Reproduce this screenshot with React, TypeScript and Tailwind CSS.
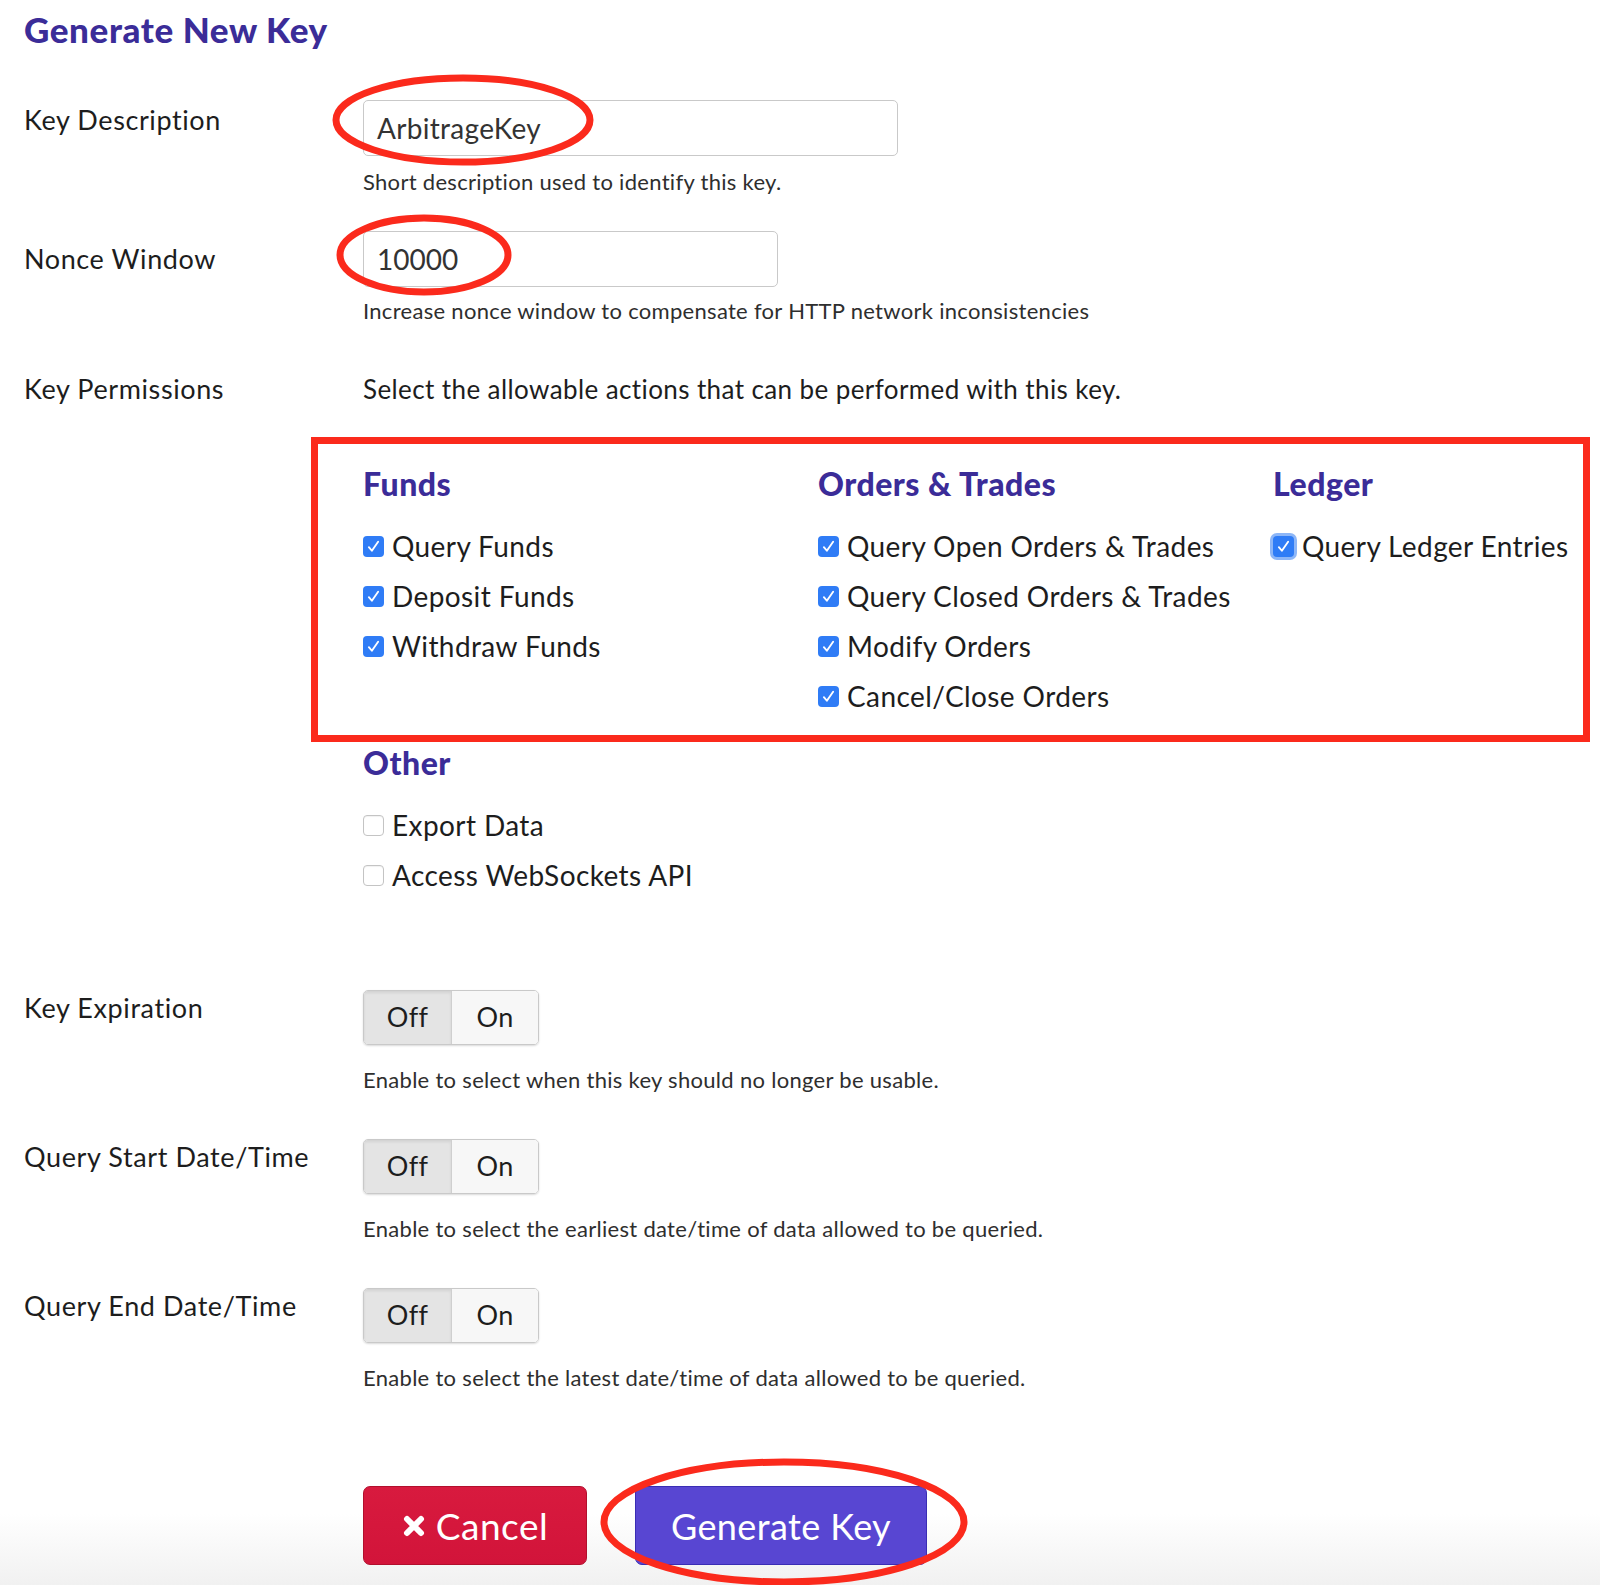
import React from "react";

const funds = ["Query Funds", "Deposit Funds", "Withdraw Funds"];
const orders = [
  "Query Open Orders & Trades",
  "Query Closed Orders & Trades",
  "Modify Orders",
  "Cancel/Close Orders",
];
const ledger = ["Query Ledger Entries"];
const other = ["Export Data", "Access WebSockets API"];

const Check = ({ checked, focus }: { checked: boolean; focus?: boolean }) => {
  if (!checked) {
    return (
      <span className="w-[21px] h-[21px] rounded-[4px] border border-[#c4c4c4] bg-white shrink-0 shadow-[inset_0_1px_1px_rgba(0,0,0,0.06)]"></span>
    );
  }
  return (
    <span
      className={
        "w-[21px] h-[21px] rounded-[4px] bg-[#2f7cf6] shrink-0 flex items-center justify-center " +
        (focus ? "ring-[3px] ring-[#8db6f7]" : "")
      }
    >
      <svg width="15" height="15" viewBox="0 0 12 12" fill="none">
        <path d="M2.3 6.5 L4.7 9.4 L9.7 2.2" stroke="white" strokeWidth="1.5" strokeLinecap="round" strokeLinejoin="round" />
      </svg>
    </span>
  );
};

const Item = ({ text, checked, focus }: { text: string; checked: boolean; focus?: boolean }) => (
  <div className="h-[50px] flex items-center gap-[8px]">
    <Check checked={checked} focus={focus} />
    <span className="text-[28px] tracking-[0.4px] text-[#1d1d1d] whitespace-nowrap">{text}</span>
  </div>
);

const Group = ({ title, items, checked, focusFirst }: { title: string; items: string[]; checked: boolean; focusFirst?: boolean }) => (
  <div>
    <h3 className="text-[32px] leading-[34px] font-black tracking-[0.5px] text-[#3b2c98]">{title}</h3>
    <div className="mt-[20px]">
      {items.map((t, i) => (
        <Item key={t} text={t} checked={checked} focus={focusFirst && i === 0} />
      ))}
    </div>
  </div>
);

const Toggle = () => (
  <div className="flex w-[176px] h-[55px] rounded-[5px] border border-[#c9c9c9] overflow-hidden shadow-[0_1px_2px_rgba(0,0,0,0.15)]">
    <div className="w-[88px] flex items-center justify-center bg-[#e4e4e4] border-r border-[#cfcfcf] shadow-[inset_0_2px_3px_rgba(0,0,0,0.08)] text-[27px] tracking-[0.3px] text-[#1d1d1d]">
      Off
    </div>
    <div className="flex-1 flex items-center justify-center bg-[#f7f7f7] text-[27px] tracking-[0.3px] text-[#1d1d1d]">
      On
    </div>
  </div>
);

const Label = ({ children, className = "pt-[3px]" }: { children: React.ReactNode; className?: string }) => (
  <div className={"w-[339px] shrink-0 text-[27px] leading-[30px] tracking-[0.6px] text-[#1d1d1d] " + className}>
    {children}
  </div>
);

const Help = ({ children, className = "" }: { children: React.ReactNode; className?: string }) => (
  <p className={"ml-[339px] text-[22px] leading-[24px] tracking-[0.3px] text-[#2e2e2e] " + className}>{children}</p>
);

const SwitchRow = ({ label, help, top }: { label: string; help: string; top: string }) => (
  <div className={top}>
    <div className="flex">
      <Label>{label}</Label>
      <Toggle />
    </div>
    <Help className="mt-[23px]">{help}</Help>
  </div>
);

export default function App() {
  return (
    <div
      className="relative w-[1600px] h-[1585px] overflow-hidden pl-[24px] bg-[linear-gradient(to_bottom,#ffffff_95.5%,#f1f1f1)]"
      style={{ fontFamily: "Lato, 'Noto Sans', sans-serif" }}
    >
      <h1 className="pt-[11px] text-[35px] leading-[36px] font-black text-[#3b2c98] tracking-[0.6px]">
        Generate New Key
      </h1>

      <div className="flex mt-[53px]">
        <Label className="pt-[5px]">Key Description</Label>
        <div className="w-[535px] h-[56px] rounded-[5px] border border-[#c9c9c9] flex items-center px-[13px] text-[28px] tracking-[0.3px] text-[#333]">
          ArbitrageKey
        </div>
      </div>
      <Help className="mt-[14px]">Short description used to identify this key.</Help>

      <div className="flex mt-[37px] items-center">
        <Label className="">Nonce Window</Label>
        <div className="w-[415px] h-[56px] rounded-[5px] border border-[#c9c9c9] flex items-center px-[13px] text-[28px] text-[#333]">
          10000
        </div>
      </div>
      <Help className="mt-[12px]">Increase nonce window to compensate for HTTP network inconsistencies</Help>

      <div className="flex mt-[51px] items-center">
        <Label className="">Key Permissions</Label>
        <div className="text-[26px] leading-[30px] tracking-[0.4px] text-[#1d1d1d]">
          Select the allowable actions that can be performed with this key.
        </div>
      </div>

      <div className="ml-[287px] mt-[33px] w-[1279px] border-[7px] border-[#fb2a1c] pl-[45px] pt-[23px] pb-[14px] grid grid-cols-[455px_455px_1fr]">
        <Group title="Funds" items={funds} checked />
        <Group title="Orders & Trades" items={orders} checked />
        <Group title="Ledger" items={ledger} checked focusFirst />
      </div>

      <div className="ml-[339px] mt-[4px]">
        <Group title="Other" items={other} checked={false} />
      </div>

      <SwitchRow
        top="mt-[90px]"
        label="Key Expiration"
        help="Enable to select when this key should no longer be usable."
      />
      <SwitchRow
        top="mt-[47px]"
        label="Query Start Date/Time"
        help="Enable to select the earliest date/time of data allowed to be queried."
      />
      <SwitchRow
        top="mt-[47px]"
        label="Query End Date/Time"
        help="Enable to select the latest date/time of data allowed to be queried."
      />

      <div className="ml-[339px] mt-[96px] flex gap-[48px]">
        <button className="w-[224px] h-[79px] rounded-[7px] bg-[linear-gradient(to_bottom,#d81a3e,#d2143a)] border border-[#b20f2d] text-white text-[37px] tracking-[0.5px] flex items-center justify-center gap-[10px]">
          <svg width="24" height="24" viewBox="0 0 24 24">
            <path d="M5 5 L19 19 M19 5 L5 19" stroke="white" strokeWidth="6" strokeLinecap="round" />
          </svg>
          Cancel
        </button>
        <button className="w-[292px] h-[79px] rounded-[7px] bg-[#5846d2] border border-[#3a2db4] text-white text-[36px] tracking-[0.4px] flex items-center justify-center">
          Generate Key
        </button>
      </div>

      {/* red annotation ellipses */}
      <svg className="absolute inset-0 pointer-events-none" width="1600" height="1585">
        <ellipse cx="463" cy="120" rx="127" ry="42" fill="none" stroke="#fb2a1c" strokeWidth="7" />
        <ellipse cx="424" cy="255" rx="84" ry="37" fill="none" stroke="#fb2a1c" strokeWidth="7" />
        <ellipse cx="784" cy="1522" rx="180" ry="60" fill="none" stroke="#fb2a1c" strokeWidth="7" />
      </svg>
    </div>
  );
}
